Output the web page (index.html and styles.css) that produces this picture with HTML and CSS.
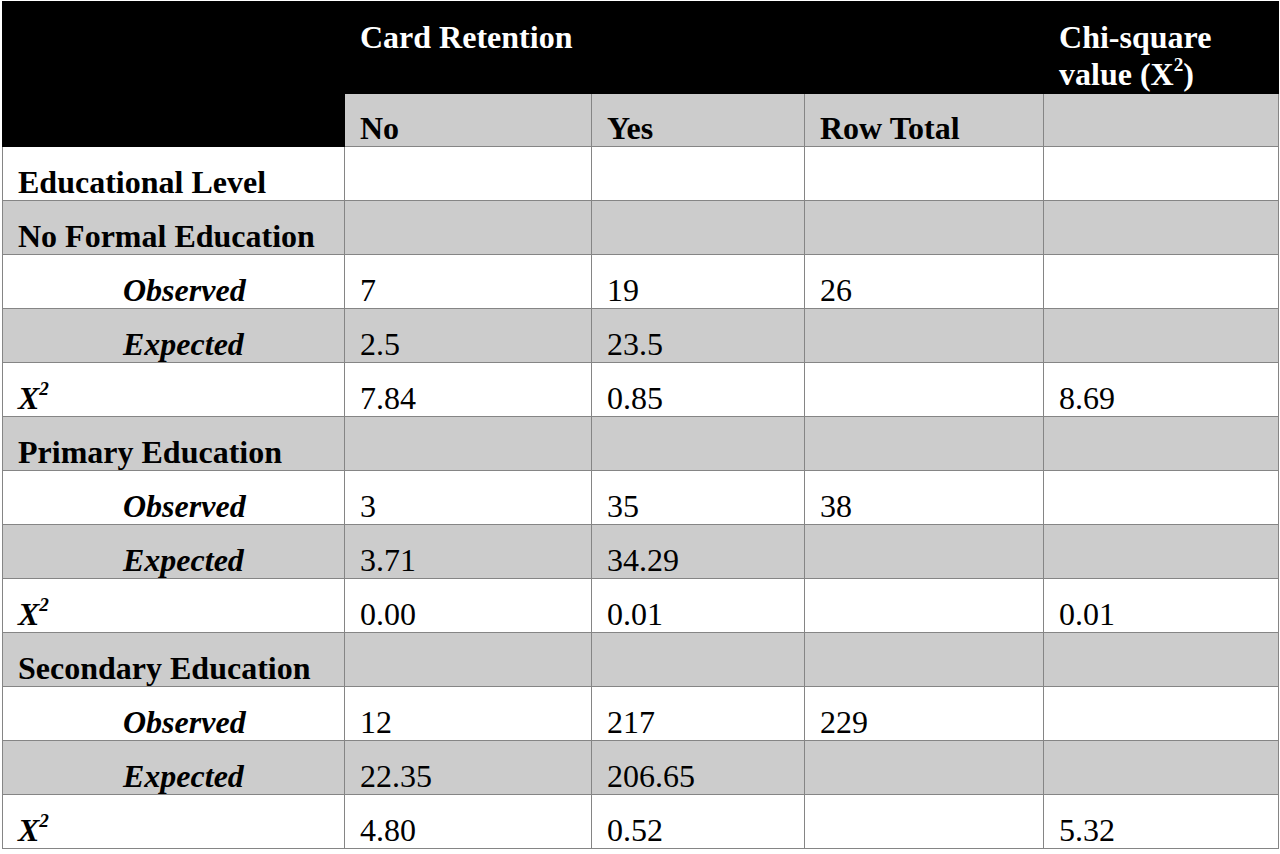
FILE: index.html
```html
<!DOCTYPE html>
<html lang="en">
<head>
    <meta charset="UTF-8">
    <meta name="viewport" content="width=device-width, initial-scale=1.0">
    <title>Card Retention by Educational Level</title>
    <link rel="stylesheet" href="styles.css">
</head>
<body>
    <table class="chi-table">
        <colgroup>
            <col class="col-label">
            <col class="col-no">
            <col class="col-yes">
            <col class="col-total">
            <col class="col-chi">
        </colgroup>
        <thead>
            <tr class="head-top">
                <th class="dark" rowspan="2"></th>
                <th class="dark" colspan="3">Card Retention</th>
                <th class="dark">Chi-square value (X<sup>2</sup>)</th>
            </tr>
            <tr class="head-sub">
                <th>No</th>
                <th>Yes</th>
                <th>Row Total</th>
                <th></th>
            </tr>
        </thead>
        <tbody>
            <tr>
                <td class="group">Educational Level</td>
                <td></td><td></td><td></td><td></td>
            </tr>
            <tr class="shade">
                <td class="group">No Formal Education</td>
                <td></td><td></td><td></td><td></td>
            </tr>
            <tr>
                <td class="sub">Observed</td>
                <td>7</td><td>19</td><td>26</td><td></td>
            </tr>
            <tr class="shade">
                <td class="sub">Expected</td>
                <td>2.5</td><td>23.5</td><td></td><td></td>
            </tr>
            <tr>
                <td class="chi">X<sup>2</sup></td>
                <td>7.84</td><td>0.85</td><td></td><td>8.69</td>
            </tr>
            <tr class="shade">
                <td class="group">Primary Education</td>
                <td></td><td></td><td></td><td></td>
            </tr>
            <tr>
                <td class="sub">Observed</td>
                <td>3</td><td>35</td><td>38</td><td></td>
            </tr>
            <tr class="shade">
                <td class="sub">Expected</td>
                <td>3.71</td><td>34.29</td><td></td><td></td>
            </tr>
            <tr>
                <td class="chi">X<sup>2</sup></td>
                <td>0.00</td><td>0.01</td><td></td><td>0.01</td>
            </tr>
            <tr class="shade">
                <td class="group">Secondary Education</td>
                <td></td><td></td><td></td><td></td>
            </tr>
            <tr>
                <td class="sub">Observed</td>
                <td>12</td><td>217</td><td>229</td><td></td>
            </tr>
            <tr class="shade">
                <td class="sub">Expected</td>
                <td>22.35</td><td>206.65</td><td></td><td></td>
            </tr>
            <tr>
                <td class="chi">X<sup>2</sup></td>
                <td>4.80</td><td>0.52</td><td></td><td>5.32</td>
            </tr>
        </tbody>
    </table>
</body>
</html>
```

FILE: styles.css
```css
body {
    margin: 0;
    background: #ffffff;
    font-family: "Liberation Serif", "Times New Roman", serif;
    color: #000;
}
.chi-table {
    margin: 1px 0 0 2px;
    width: 1277px;
    border-collapse: collapse;
    table-layout: fixed;
    font-size: 32px;
}
.col-label { width: 342px; }
.col-no { width: 247px; }
.col-yes { width: 213px; }
.col-total { width: 239px; }
.col-chi { width: 235px; }
th, td {
    border: 1px solid #858585;
    padding: 18px 14px 0 15px;
    line-height: 35px;
    height: 35px;
    text-align: left;
    vertical-align: top;
    font-weight: normal;
    white-space: nowrap;
}
th {
    font-weight: bold;
}
.head-top th {
    padding-top: 17px;
    line-height: 37px;
    height: 74px;
    white-space: normal;
}
th.dark {
    background: #000;
    color: #fff;
    border-color: #000;
}
.head-sub th {
    background: #cccccc;
    padding-top: 17px;
    height: 35px;
}
sup {
    font-size: 0.6em;
    line-height: 0;
    vertical-align: 0.75em;
}
.shade td {
    background: #cccccc;
}
.group {
    font-weight: bold;
}
.sub {
    font-weight: bold;
    font-style: italic;
    padding-left: 120px;
}
.chi {
    font-weight: bold;
    font-style: italic;
}
```
